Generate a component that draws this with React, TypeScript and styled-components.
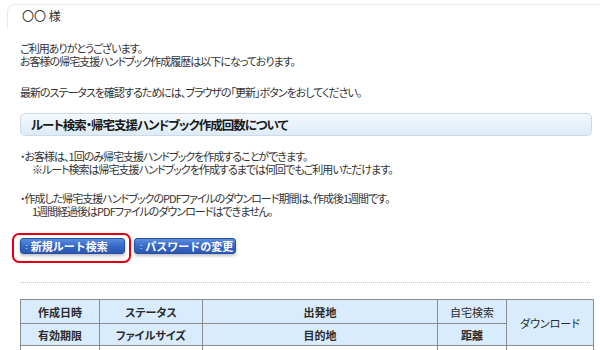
import React from "react";
import styled, { createGlobalStyle } from "styled-components";

const GlobalStyle = createGlobalStyle`
  html, body {
    margin: 0;
    padding: 0;
    background: #ffffff;
  }
  body {
    font-family: "Noto Sans CJK JP", "Noto Sans", sans-serif;
    font-feature-settings: "palt";
    color: #333333;
    font-size: 12px;
  }
`;

const Page = styled.div`
  width: 600px;
  height: 350px;
  overflow: hidden;
  padding-top: 4px;
  box-sizing: border-box;
`;

const Header = styled.div`
  margin-left: 7px;
  height: 23px;
  border-top: 1px solid #f1e6e6;
  border-left: 1px solid #efe8e8;
  border-top-left-radius: 8px;
  padding-left: 14px;
  font-size: 12px;
  line-height: 21px;
  color: #333;
`;

const Content = styled.div`
  padding: 0 8px 0 20px;
`;

const Para = styled.p<{ $top: number }>`
  margin: ${(p) => p.$top}px 0 0;
  font-size: 11px;
  line-height: 13px;
  letter-spacing: -1px;
  white-space: nowrap;
`;

const Indent = styled.span`
  display: inline-block;
  padding-left: 12px;
`;

const SectionTitle = styled.h2`
  margin: 14px 0 0;
  height: 23px;
  box-sizing: border-box;
  border: 1px solid #cdd9e4;
  border-radius: 5px;
  background: linear-gradient(#f4f9fd, #dcebf6);
  padding-left: 10px;
  font-size: 12.5px;
  font-weight: bold;
  line-height: 21px;
  color: #1a1a1a;
  letter-spacing: -1px;
  white-space: nowrap;
`;

const ButtonRow = styled.div`
  display: flex;
  align-items: flex-start;
  margin: 15px 0 0 -8px;
`;

const Highlight = styled.div`
  border: 2.5px solid #e60012;
  border-radius: 7px;
  padding: 2.5px 4.5px 7.5px 5.5px;
`;

const ActionButton = styled.button<{ $offset?: number; $width: number }>`
  display: flex;
  align-items: center;
  gap: 3px;
  width: ${(p) => p.$width}px;
  height: 16px;
  margin: ${(p) => p.$offset ?? 0}px 0 0 ${(p) => (p.$offset ? 3 : 0)}px;
  padding: 0 0 0 5px;
  border: 1px solid #2450a4;
  border-radius: 3px;
  background: linear-gradient(#5b8ce0, #3566c4 55%, #2b58b4);
  box-shadow: 0 2px 3px rgba(120, 120, 130, 0.45);
  color: #ffffff;
  font-family: inherit;
  font-size: 11px;
  font-weight: bold;
  line-height: 14px;
  letter-spacing: 0px;
  white-space: nowrap;
  cursor: pointer;
`;

const Marker = styled.span`
  font-size: 8px;
  font-weight: normal;
  opacity: 0.9;
`;

const Divider = styled.div`
  margin-top: 19px;
  border-top: 1px dotted #c9c9c9;
  width: 570px;
`;

const Table = styled.table`
  margin-top: 16px;
  width: 573px;
  border-collapse: collapse;
  table-layout: fixed;
  border: 1px solid #8c8c8c;
`;

const Cell = styled.td<{ $bold?: boolean; $h?: number }>`
  border: 1px solid #8c8c8c;
  background: #d8ecfd;
  text-align: center;
  font-size: 11px;
  font-weight: ${(p) => (p.$bold ? "bold" : "normal")};
  height: ${(p) => p.$h ?? 22}px;
  padding: 0;
  color: #2b2b2b;
  white-space: nowrap;
`;

const DataCell = styled.td`
  border: 1px solid #8c8c8c;
  background: #ffffff;
  height: 22px;
`;

export default function App() {
  return (
    <Page>
      <GlobalStyle />
      <Header>〇〇 様</Header>
      <Content>
        <Para $top={14}>
          ご利用ありがとうございます。
          <br />
          お客様の帰宅支援ハンドブック作成履歴は以下になっております。
        </Para>
        <Para $top={18}>
          最新のステータスを確認するためには、ブラウザの「更新」ボタンをおしてください。
        </Para>
        <SectionTitle>ルート検索・帰宅支援ハンドブック作成回数について</SectionTitle>
        <Para $top={14}>
          ・お客様は、1回のみ帰宅支援ハンドブックを作成することができます。
          <br />
          <Indent>※ルート検索は帰宅支援ハンドブックを作成するまでは何回でもご利用いただけます。</Indent>
        </Para>
        <Para $top={16}>
          ・作成した帰宅支援ハンドブックのPDFファイルのダウンロード期間は、作成後1週間です。
          <br />
          <Indent>1週間経過後はPDFファイルのダウンロードはできません。</Indent>
        </Para>
        <ButtonRow>
          <Highlight>
            <ActionButton $width={105}>
              <Marker>:</Marker>新規ルート検索
            </ActionButton>
          </Highlight>
          <ActionButton $width={102} $offset={5}>
            <Marker>:</Marker>パスワードの変更
          </ActionButton>
        </ButtonRow>
        <Divider />
        <Table>
          <colgroup>
            <col style={{ width: 79 }} />
            <col style={{ width: 103 }} />
            <col style={{ width: 235 }} />
            <col style={{ width: 69 }} />
            <col style={{ width: 87 }} />
          </colgroup>
          <tbody>
            <tr>
              <Cell $bold $h={23}>作成日時</Cell>
              <Cell $bold $h={23}>ステータス</Cell>
              <Cell $bold $h={23}>出発地</Cell>
              <Cell $h={23}>自宅検索</Cell>
              <Cell rowSpan={2}>ダウンロード</Cell>
            </tr>
            <tr>
              <Cell $bold $h={21}>有効期限</Cell>
              <Cell $bold $h={21}>ファイルサイズ</Cell>
              <Cell $bold $h={21}>目的地</Cell>
              <Cell $bold $h={21}>距離</Cell>
            </tr>
            <tr>
              <DataCell />
              <DataCell />
              <DataCell />
              <DataCell />
              <DataCell />
            </tr>
          </tbody>
        </Table>
      </Content>
    </Page>
  );
}
